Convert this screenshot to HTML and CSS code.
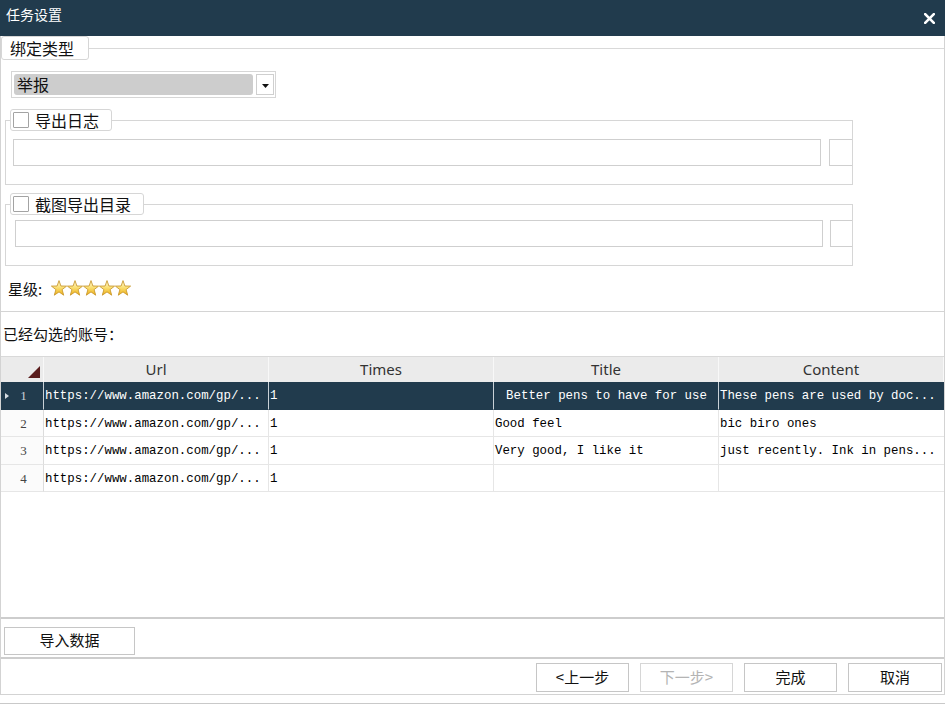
FILE: index.html
```html
<!DOCTYPE html>
<html lang="zh-CN">
<head>
<meta charset="utf-8">
<title>任务设置</title>
<link rel="stylesheet" href="styles.css">
</head>
<body>
<div class="window">
  <div class="titlebar">
    <span class="title">任务设置</span>
    <svg class="close" viewBox="0 0 11 11" width="11" height="11"><path d="M1.2 1.2 L9.8 9.8 M9.8 1.2 L1.2 9.8" stroke="#fff" stroke-width="2.6" stroke-linecap="square"/></svg>
  </div>
  <div class="panel">
    <fieldset class="group-main">
      <legend class="tab tab-main">绑定类型</legend>
      <div class="select">
        <span class="select-value">举报</span>
        <span class="select-btn"><svg viewBox="0 0 7 4" width="7" height="4"><path d="M0 0 H7 L3.5 4 Z" fill="#111"/></svg></span>
      </div>
      <fieldset class="group">
        <legend class="tab tab-check"><span class="tab-inner"><span class="checkbox"></span>导出日志</span></legend>
        <div class="path-row row-a"><div class="path-input"></div><div class="path-btn"></div></div>
      </fieldset>
      <fieldset class="group group-b">
        <legend class="tab tab-check"><span class="tab-inner"><span class="checkbox"></span>截图导出目录</span></legend>
        <div class="path-row row-b"><div class="path-input"></div><div class="path-btn"></div></div>
      </fieldset>
      <div class="rating">
        <span>星级:</span>
        <svg class="stars" viewBox="0 0 80 16" width="80" height="16">
          <defs>
            <linearGradient id="sg" x1="0" y1="0" x2="0" y2="1">
              <stop offset="0" stop-color="#fffbe0"/>
              <stop offset="0.45" stop-color="#fbe27a"/>
              <stop offset="1" stop-color="#eeae12"/>
            </linearGradient>
            <polygon id="star" points="8,0.6 9.9,6 15.6,6.1 11.1,9.6 12.7,15.2 8,11.9 3.3,15.2 4.9,9.6 0.4,6.1 6.1,6" fill="url(#sg)" stroke="#c99a32" stroke-width="0.9" stroke-linejoin="round"/>
          </defs>
          <use href="#star" x="0"/>
          <use href="#star" x="16"/>
          <use href="#star" x="32"/>
          <use href="#star" x="48"/>
          <use href="#star" x="64"/>
        </svg>
      </div>
    </fieldset>

    <div class="accounts-label">已经勾选的账号：</div>

    <div class="grid-box">
      <div class="grid">
        <div class="hcell corner"><svg viewBox="0 0 12 12" width="12" height="12"><path d="M12 0 V12 H0 Z" fill="#5a1d1d"/></svg></div>
        <div class="hcell">Url</div>
        <div class="hcell">Times</div>
        <div class="hcell">Title</div>
        <div class="hcell">Content</div>

        <div class="rhead sel"><span class="marker"></span>1</div>
        <div class="cell sel">https://www.amazon.com/gp/...</div>
        <div class="cell sel">1</div>
        <div class="cell sel center">Better pens to have for use</div>
        <div class="cell sel">These pens are used by doc...</div>

        <div class="rhead">2</div>
        <div class="cell">https://www.amazon.com/gp/...</div>
        <div class="cell">1</div>
        <div class="cell">Good feel</div>
        <div class="cell">bic biro ones</div>

        <div class="rhead">3</div>
        <div class="cell">https://www.amazon.com/gp/...</div>
        <div class="cell">1</div>
        <div class="cell">Very good, I like it</div>
        <div class="cell">just recently. Ink in pens...</div>

        <div class="rhead">4</div>
        <div class="cell">https://www.amazon.com/gp/...</div>
        <div class="cell">1</div>
        <div class="cell"></div>
        <div class="cell"></div>
      </div>
    </div>

    <div class="import-bar">
      <button class="btn btn-import">导入数据</button>
    </div>
    <div class="nav-bar">
      <button class="btn btn-nav">&lt;上一步</button>
      <button class="btn btn-nav disabled">下一步&gt;</button>
      <button class="btn btn-nav">完成</button>
      <button class="btn btn-nav">取消</button>
    </div>
  </div>
</div>
</body>
</html>
```

FILE: styles.css
```css
* { box-sizing: border-box; }
html, body { margin: 0; padding: 0; background: #fff; }
body {
  font-family: "Noto Sans", "Noto Sans CJK SC", sans-serif;
  color: #111;
}

.window {
  width: 945px;
  height: 704px;
  border-bottom: 1px solid #c9c9c9;
  display: flex;
  flex-direction: column;
  overflow: hidden;
}

.titlebar {
  height: 36px;
  flex-shrink: 0;
  background: #213b4d;
  display: flex;
  justify-content: space-between;
  align-items: flex-start;
}
.title {
  color: #fff;
  font-family: "Noto Sans CJK SC", sans-serif;
  font-size: 14px;
  line-height: 20px;
  margin: 4px 0 0 6px;
}
.close { margin: 13px 10px 0 0; }

.panel {
  height: 659px;
  flex-shrink: 0;
  border: 1px solid #d3d3d3;
  border-top: none;
  display: flex;
  flex-direction: column;
}

/* group boxes */
.group-main {
  margin: 0;
  padding: 0 0 13px 0;
  border: none;
  border-top: 1px solid #d9d9d9;
  border-bottom: 1px solid #d4d4d4;
  min-inline-size: 0;
}
.tab {
  background: #fff;
  border: 1px solid #d6d6d6;
  border-radius: 3px;
  font-family: "Noto Sans CJK SC", sans-serif;
  font-size: 16px;
  color: #111;
}
.tab-main {
  height: 24px;
  line-height: 22px;
  padding: 0 14px 0 8px;
}
.tab-check {
  height: 22px;
  line-height: 20px;
  padding: 0 12px 0 2px;
}
.tab-inner {
  display: flex;
  align-items: center;
  gap: 6px;
  height: 20px;
}
.checkbox {
  width: 16px;
  height: 16px;
  border: 1px solid #a3a3a3;
  border-radius: 1px;
  background: #fff;
}

.select {
  margin: 11px 0 0 10px;
  width: 265px;
  height: 27px;
  border: 1px solid #d6d6d6;
  padding: 2px 1px 2px 2px;
  display: flex;
  gap: 3px;
}
.select-value {
  width: 239px;
  background: #cdcdcd;
  border-radius: 3px;
  font-family: "Noto Sans CJK SC", sans-serif;
  font-size: 16px;
  line-height: 21px;
  padding-left: 3px;
}
.select-btn {
  width: 18px;
  border: 1px solid #cfcfcf;
  background: #fff;
  display: flex;
  align-items: center;
  justify-content: center;
  padding-top: 2px;
}

.group {
  margin: 11px 0 0 4px;
  width: 848px;
  border: 1px solid #d6d6d6;
  padding: 0 0 18px 4px;
  min-inline-size: 0;
}
.group-b { margin-top: 8px; }

.path-row { display: flex; }
.row-a { margin-top: 8px; }
.row-b { margin-top: 5px; }
.path-input {
  width: 808px;
  height: 27px;
  border: 1px solid #cfcfcf;
  margin-left: 3px;
}
.row-b .path-input { margin-left: 5px; }
.path-btn {
  flex: 1;
  height: 27px;
  margin-left: 8px;
  border: 1px solid #cfcfcf;
  border-right: none;
}
.row-b .path-btn { margin-left: 7px; }

.rating {
  display: flex;
  align-items: center;
  gap: 9px;
  margin: 12px 0 0 7px;
  height: 20px;
  font-family: "Noto Sans CJK SC", sans-serif;
  font-size: 15px;
}
.stars { display: block; }

.accounts-label {
  height: 44px;
  flex-shrink: 0;
  padding: 12px 0 0 2px;
  font-family: "Noto Sans CJK SC", sans-serif;
  font-size: 15px;
  line-height: 20px;
}

/* data grid */
.grid-box {
  height: 263px;
  flex-shrink: 0;
  border-top: 1px solid #d9d9d9;
  border-bottom: 2px solid #cdcdcd;
}
.grid {
  display: grid;
  grid-template-columns: 43px repeat(3, 225px) 1fr;
  grid-auto-rows: 27.5px;
  grid-template-rows: 25px;
}
.hcell {
  height: 25px;
  background: #ebebeb;
  border-right: 1px solid #f8f8f8;
  font-family: "Noto Sans", sans-serif;
  font-size: 15px;
  line-height: 24px;
  color: #333;
  text-align: center;
}
.hcell:last-child { border-right: none; }
.corner {
  display: flex;
  align-items: flex-end;
  justify-content: flex-end;
  padding: 0 3px 4px 0;
}
.corner svg { display: block; }

.rhead {
  position: relative;
  background: #fbfbfb;
  border-right: 1px solid #dcdcdc;
  border-bottom: 1px solid #e6e6e6;
  font-family: "Liberation Serif", serif;
  font-size: 13px;
  color: #444;
  text-align: center;
  line-height: 28px;
  padding-left: 3px;
}
.rhead.sel {
  background: #213b4d;
  color: #c9d1d7;
  border-right-color: #c9d1d7;
  border-bottom-color: #213b4d;
}
.marker {
  position: absolute;
  left: 4px;
  top: 11px;
  width: 0;
  height: 0;
  border-top: 3.5px solid transparent;
  border-bottom: 3.5px solid transparent;
  border-left: 4px solid #d7dde2;
}
.cell {
  border-right: 1px solid #e6e6e6;
  border-bottom: 1px solid #e6e6e6;
  font-family: "Liberation Mono", monospace;
  font-size: 12.4px;
  line-height: 28px;
  padding-left: 1px;
  white-space: nowrap;
  overflow: hidden;
  color: #000;
}
.cell:nth-child(5n) { border-right: none; }
.cell.sel {
  background: #213b4d;
  color: #fff;
  border-right-color: #c9d1d7;
  border-bottom-color: #213b4d;
}
.cell.center { text-align: center; }

/* buttons */
.btn {
  background: #fff;
  border: 1px solid #c6c6c6;
  border-radius: 0;
  font-family: "Noto Sans CJK SC", sans-serif;
  font-size: 15px;
  line-height: 20px;
  color: #111;
  padding: 0 0 2px 0;
  margin: 0;
}
.import-bar {
  height: 40px;
  flex-shrink: 0;
  border-bottom: 2px solid #cdcdcd;
  padding: 8px 0 0 3px;
}
.btn-import { width: 131px; height: 28px; }
.nav-bar {
  flex: 1;
  display: flex;
  justify-content: flex-end;
  align-items: flex-start;
  gap: 11px;
  padding: 4px 2px 0 0;
}
.btn-nav { width: 93px; height: 29px; }
.btn-nav:last-child { width: 94px; }
.btn-nav.disabled { color: #b4b4b4; border-color: #d6d6d6; }
```
